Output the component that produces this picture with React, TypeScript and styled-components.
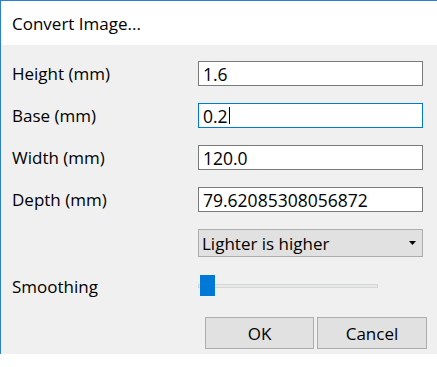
import React from "react";
import styled, { createGlobalStyle } from "styled-components";

const GlobalStyle = createGlobalStyle`
  html, body {
    margin: 0;
    padding: 0;
    background: #ffffff;
  }
  body {
    font-family: "Open Sans", "Noto Sans", "Liberation Sans", sans-serif;
    font-size: 17px;
    color: #000000;
  }
`;

const Window = styled.div`
  width: 100%;
  box-sizing: border-box;
  border-top: 1px solid #2b7fd4;
  border-left: 1px solid #2b7fd4;
  display: flex;
  flex-direction: column;
`;

const TitleBar = styled.div`
  height: 44px;
  background: #ffffff;
  display: flex;
  align-items: center;
  padding-left: 11px;
  font-size: 17px;
`;

const Body = styled.div`
  height: 309px;
  box-sizing: border-box;
  background: #f0f0f0;
  padding: 16px 0 0 11px;
  display: flex;
  flex-direction: column;
`;

const Form = styled.div`
  display: grid;
  grid-template-columns: 186px 225px;
  row-gap: 17px;
  align-items: center;
`;

const Label = styled.div<{ $offset?: number }>`
  line-height: 20px;
  padding-top: ${(p) => p.$offset ?? 0}px;
`;

const Field = styled.div<{ $focused?: boolean }>`
  height: 25px;
  box-sizing: border-box;
  background: #ffffff;
  border: 1px solid ${(p) => (p.$focused ? "#0078d7" : "#7a7a7a")};
  padding-left: 4px;
  font-size: 17.5px;
  display: flex;
  align-items: center;
  white-space: nowrap;
  overflow: hidden;
`;

const Caret = styled.span`
  display: inline-block;
  width: 1px;
  height: 17px;
  background: #000000;
  margin-left: 1px;
`;

const Select = styled.div`
  grid-column: 2;
  height: 28px;
  box-sizing: border-box;
  background: #e1e1e1;
  border: 1px solid #adadad;
  padding: 0 6px 0 3px;
  display: flex;
  align-items: center;
  justify-content: space-between;
`;

const Slider = styled.div`
  position: relative;
  height: 21px;
  display: flex;
  align-items: center;
`;

const Track = styled.div`
  width: 180px;
  height: 4px;
  box-sizing: border-box;
  background: #e7eaea;
  border: 1px solid #d6d6d6;
`;

const Thumb = styled.div`
  position: absolute;
  left: 2px;
  top: 0;
  width: 15px;
  height: 21px;
  background: #0078d7;
`;

const ButtonRow = styled.div`
  display: flex;
  gap: 3px;
  margin-top: 20px;
  padding-left: 193px;
`;

const Button = styled.div<{ $w: number }>`
  width: ${(p) => p.$w}px;
  height: 32px;
  box-sizing: border-box;
  background: #e1e1e1;
  border: 1px solid #adadad;
  display: flex;
  align-items: center;
  justify-content: center;
`;

const fields: { label: string; value: string; focused?: boolean }[] = [
  { label: "Height (mm)", value: "1.6" },
  { label: "Base (mm)", value: "0.2", focused: true },
  { label: "Width (mm)", value: "120.0" },
  { label: "Depth (mm)", value: "79.62085308056872" },
];

export default function App() {
  return (
    <>
      <GlobalStyle />
      <Window>
        <TitleBar>Convert Image...</TitleBar>
        <Body>
          <Form>
            {fields.map((f) => (
              <React.Fragment key={f.label}>
                <Label>{f.label}</Label>
                <Field $focused={f.focused}>
                  {f.value}
                  {f.focused && <Caret />}
                </Field>
              </React.Fragment>
            ))}
            <Select>
              <span>Lighter is higher</span>
              <svg width="7" height="4" viewBox="0 0 7 4">
                <polygon points="0,0 7,0 3.5,4" fill="#000" />
              </svg>
            </Select>
            <Label $offset={3}>Smoothing</Label>
            <Slider>
              <Track />
              <Thumb />
            </Slider>
          </Form>
          <ButtonRow>
            <Button $w={109}>OK</Button>
            <Button $w={110}>Cancel</Button>
          </ButtonRow>
        </Body>
      </Window>
    </>
  );
}
